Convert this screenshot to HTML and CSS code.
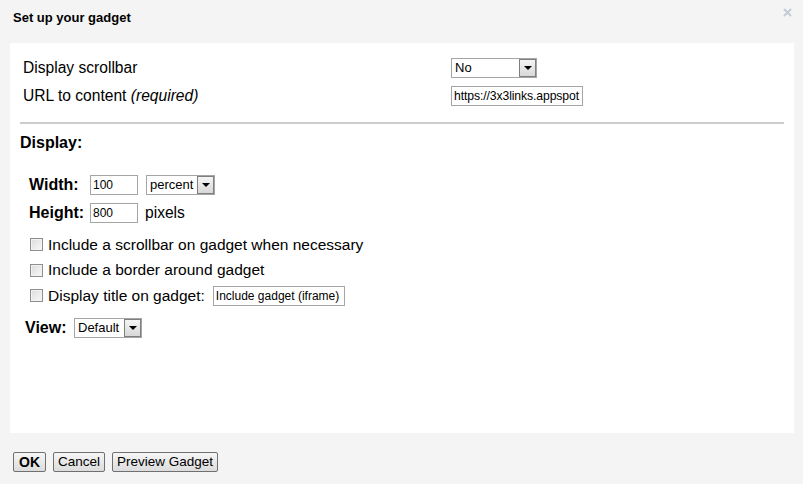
FILE: index.html
```html
<!DOCTYPE html>
<html>
<head>
<meta charset="utf-8">
<link rel="stylesheet" href="styles.css">
</head>
<body>
<div class="dialog">
  <div class="header">
    <div class="title">Set up your gadget</div>
    <svg class="close" width="9" height="9" viewBox="0 0 9 9"><path d="M1 1 L8 8 M8 1 L1 8" stroke="#c3cbd8" stroke-width="2"/></svg>
  </div>
  <div class="panel">
    <div class="settings">
      <div class="label">Display scrollbar</div>
      <div class="ctrl">
        <div class="select sel-no"><span class="val">No</span><span class="arrow"><span class="tri"></span></span></div>
      </div>
      <div class="label">URL to content <i>(required)</i></div>
      <div class="ctrl"><div class="input url">https://3x3links.appspot</div></div>
    </div>
    <div class="sep"></div>
    <div class="heading">Display:</div>
    <div class="dims">
      <div class="dim-row">
        <span class="dlabel">Width:</span>
        <div class="input small">100</div>
        <div class="select sel-pct"><span class="val">percent</span><span class="arrow"><span class="tri"></span></span></div>
      </div>
      <div class="dim-row">
        <span class="dlabel">Height:</span>
        <div class="input small">800</div>
        <span class="unit">pixels</span>
      </div>
    </div>
    <div class="checks">
      <div class="check-row"><span class="cb"></span><span>Include a scrollbar on gadget when necessary</span></div>
      <div class="check-row"><span class="cb"></span><span>Include a border around gadget</span></div>
      <div class="check-row"><span class="cb"></span><span>Display title on gadget:</span><div class="input titlein">Include gadget (iframe)</div></div>
    </div>
    <div class="view-row">
      <span class="vlabel">View:</span>
      <div class="select sel-view"><span class="val">Default</span><span class="arrow"><span class="tri"></span></span></div>
    </div>
  </div>
  <div class="footer">
    <button class="btn ok">OK</button>
    <button class="btn">Cancel</button>
    <button class="btn">Preview Gadget</button>
  </div>
</div>
</body>
</html>
```

FILE: styles.css
```css
* { box-sizing: border-box; }
html, body {
  margin: 0;
  padding: 0;
  background: #f4f4f4;
  font-family: "Liberation Sans", Arial, sans-serif;
  color: #000;
}
.dialog {
  width: 803px;
  height: 484px;
  background: #f4f4f4;
}
.header {
  height: 43px;
  position: relative;
  padding: 10px 0 0 13px;
}
.title {
  font-weight: bold;
  font-size: 13px;
  line-height: 15px;
}
.close {
  position: absolute;
  right: 11px;
  top: 8px;
}
.panel {
  margin: 0 9px 0 10px;
  height: 390px;
  background: #fff;
  padding-top: 11px;
}
.settings {
  display: grid;
  grid-template-columns: 428px auto;
  grid-auto-rows: 28px;
  padding-left: 13px;
  font-size: 15.6px;
}
.label {
  line-height: 28px;
  white-space: nowrap;
}
.ctrl {
  display: flex;
  align-items: center;
}
.input {
  height: 20px;
  border: 1px solid #a5a5a5;
  background: #fff;
  font-size: 12px;
  line-height: 18px;
  padding: 0 2px;
  white-space: nowrap;
  overflow: hidden;
  text-overflow: clip;
}
.url { width: 132px; font-size: 12.2px; letter-spacing: -0.1px; }
.select {
  height: 20px;
  border: 1px solid #a5a5a5;
  background: #fff;
  display: flex;
  align-items: stretch;
  font-size: 13px;
}
.select .val {
  flex: 1;
  padding-left: 3px;
  line-height: 18px;
}
.select .arrow {
  width: 17px;
  border: 1px solid #7f7f7f;
  background: linear-gradient(#f4f4f4, #d8d8d8);
  display: flex;
  align-items: center;
  justify-content: center;
}
.tri {
  width: 0;
  height: 0;
  border-left: 4px solid transparent;
  border-right: 4px solid transparent;
  border-top: 4px solid #000;
}
.sel-no { width: 86px; }
.sel-pct { width: 69px; }
.sel-view { width: 68px; }
.sep {
  margin: 12px 10px 0 10px;
  height: 2px;
  background: #cccccc;
}
.heading {
  font-weight: bold;
  font-size: 16px;
  line-height: 18px;
  margin: 10px 0 0 10px;
}
.dims {
  margin-top: 19px;
  padding-left: 19px;
}
.dim-row {
  height: 28px;
  display: flex;
  align-items: center;
  font-size: 15.6px;
}
.dlabel {
  font-weight: bold;
  font-size: 16px;
  width: 61px;
}
.small { width: 48px; }
.dim-row .select { margin-left: 8px; }
.unit { margin-left: 7px; }
.checks {
  margin-top: 5px;
  padding-left: 20px;
}
.check-row {
  height: 25.5px;
  display: flex;
  align-items: center;
  font-size: 15.5px;
  white-space: nowrap;
}
.cb {
  width: 13px;
  height: 13px;
  border: 1px solid #8e8e8e;
  background: linear-gradient(135deg, #dcdcdc, #f8f8f8);
  box-shadow: inset 0 0 0 1px #f2f2f2;
  margin-right: 5px;
  flex: none;
}
.titlein {
  margin-left: 8px;
  width: 132px;
  font-size: 12px;
}
.view-row {
  margin-top: 5px;
  padding-left: 15px;
  height: 28px;
  display: flex;
  align-items: center;
  font-size: 16px;
}
.vlabel {
  font-weight: bold;
  width: 49px;
}
.footer {
  padding: 19px 0 0 13px;
  display: flex;
  gap: 7px;
}
.btn {
  height: 20px;
  font-family: "Liberation Sans", Arial, sans-serif;
  font-size: 13.5px;
  line-height: 16px;
  padding: 0 5px;
  border: 1px solid #707070;
  border-radius: 2px;
  background: linear-gradient(#f6f6f6, #dcdcdc);
  color: #000;
}
.btn:not(.ok) { padding: 0 4px; }
.ok { font-weight: bold; font-size: 14px; }
```
